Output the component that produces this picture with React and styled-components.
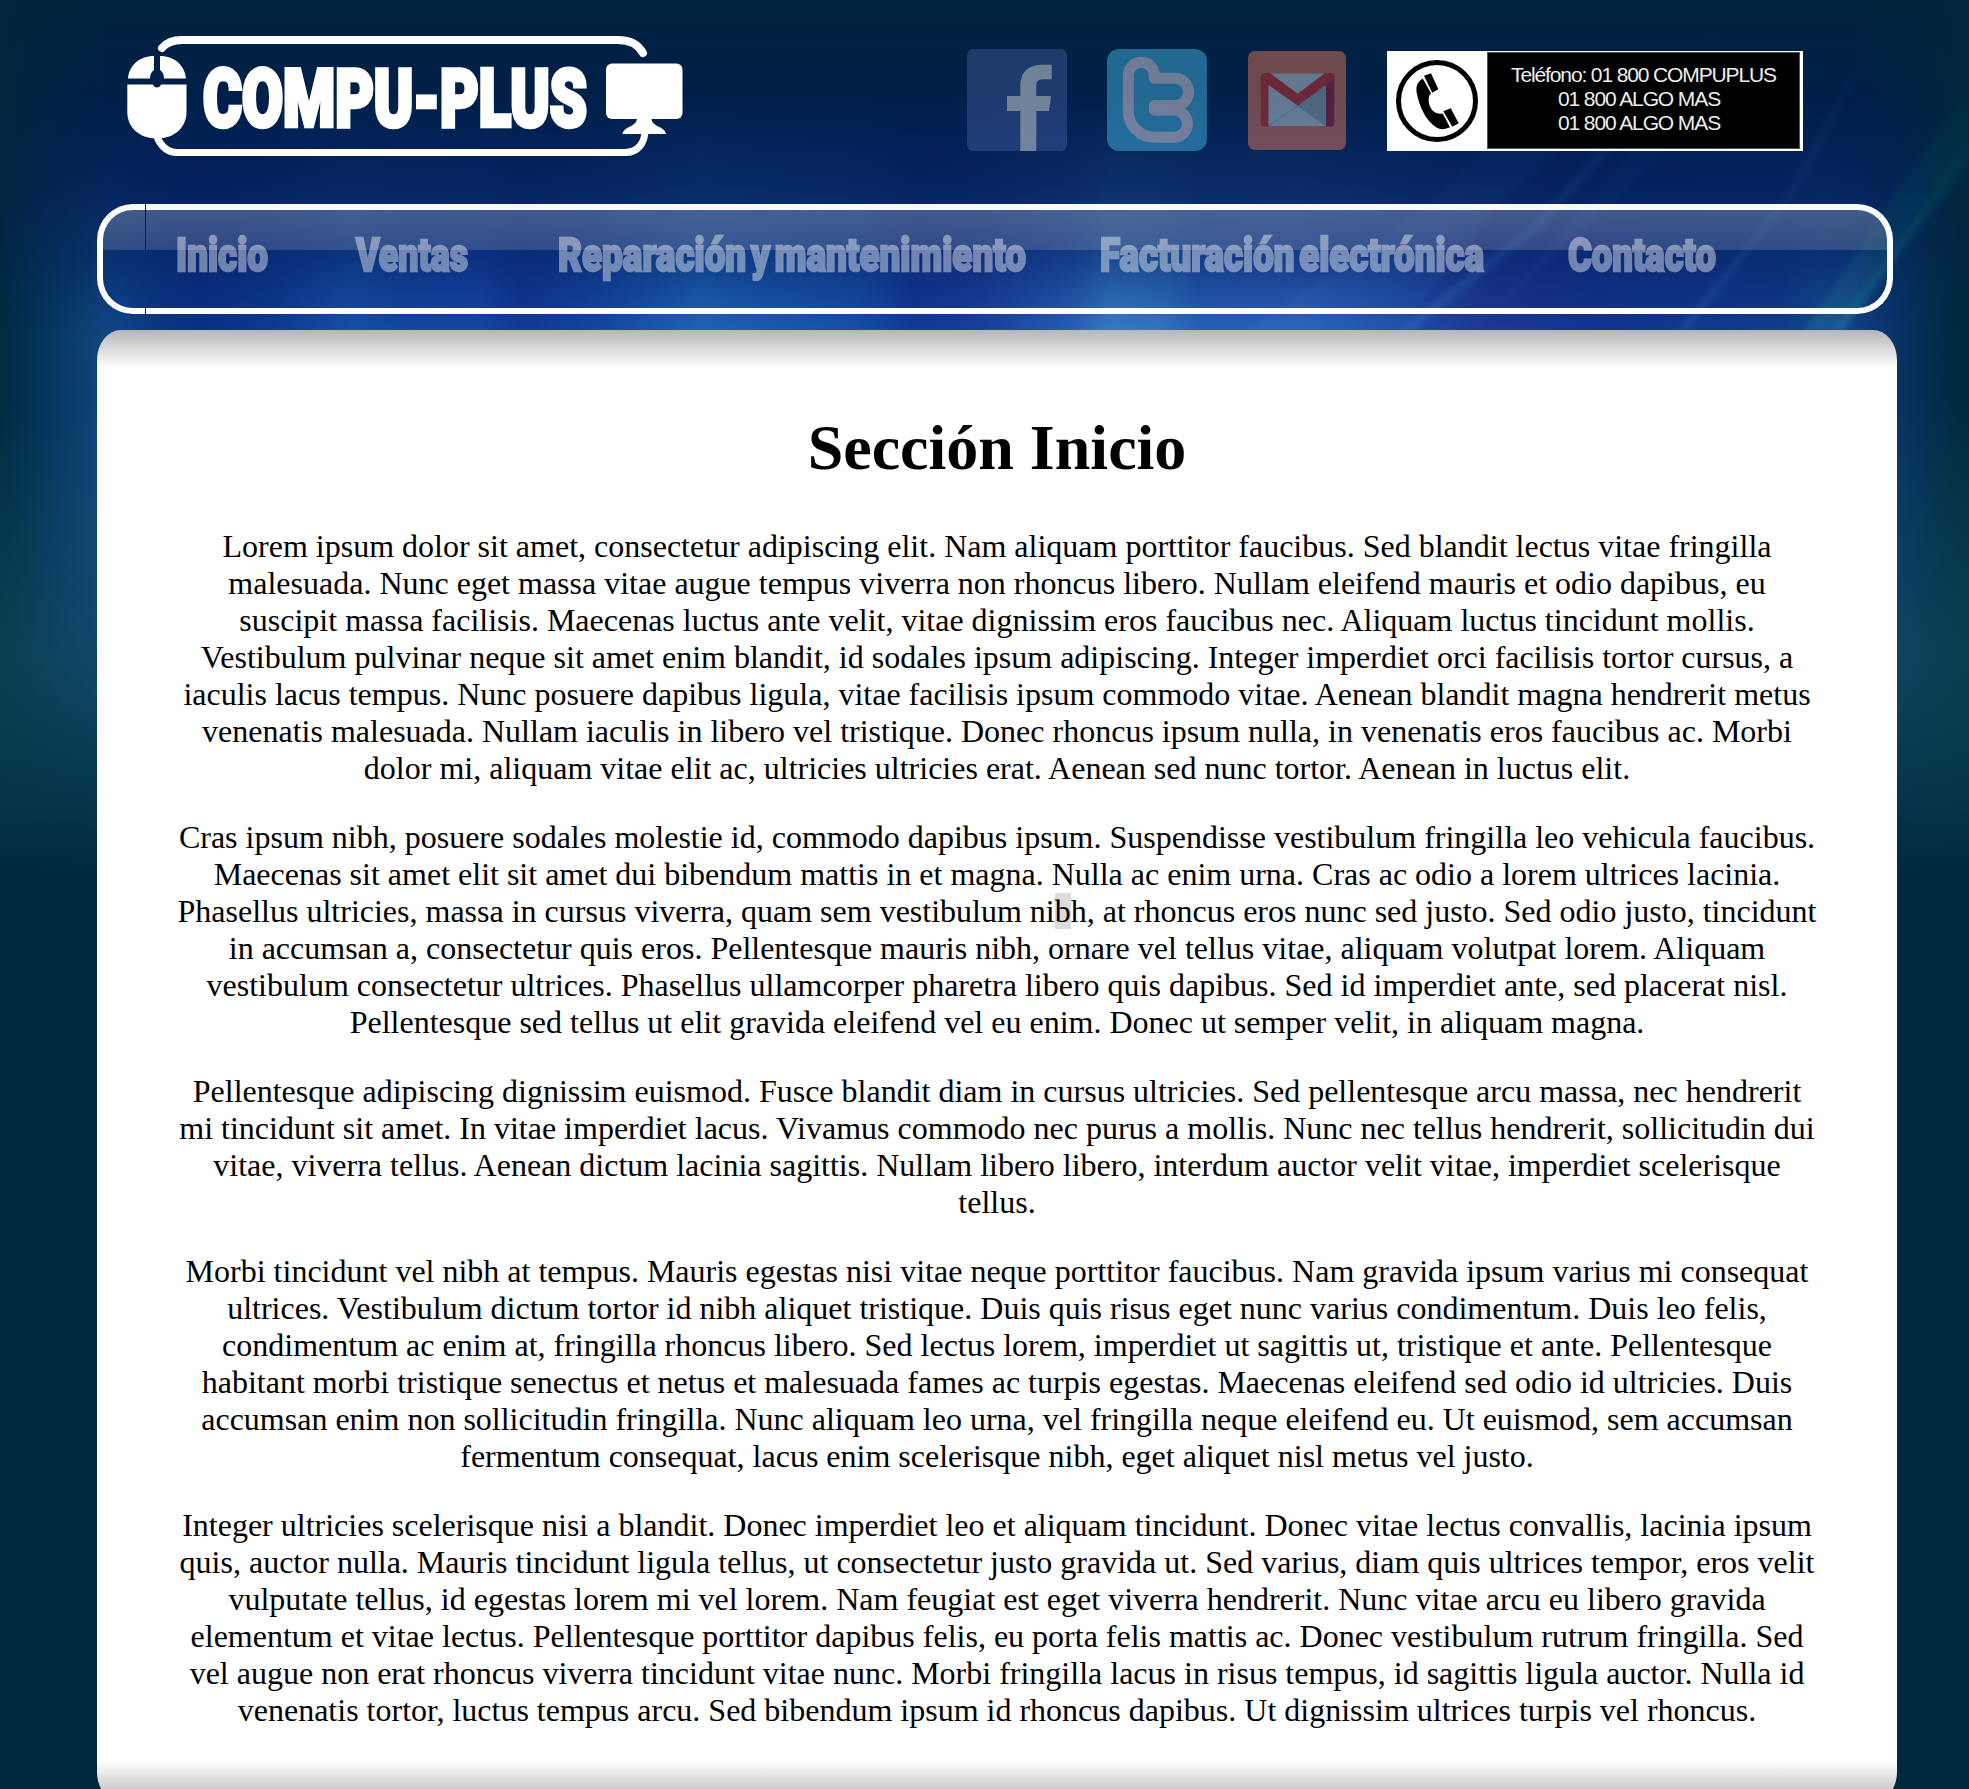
import React from "react";
import styled, { createGlobalStyle } from "styled-components";

const GlobalStyle = createGlobalStyle`
  body { margin: 0; background: #00283e; }
`;

const Page = styled.div`
  position: relative;
  width: 1969px;
  height: 1789px;
  overflow: hidden;
  background: #00283e;
  font-family: "Liberation Serif", "Times New Roman", serif;
  font-size: 32px;
  color: #000;
`;

const BackdropSvg = styled.svg`
  position: absolute;
  inset: 0;
`;

const Shell = styled.div`
  position: relative;
  display: flex;
  flex-direction: column;
  padding-left: 97px;
`;

const Header = styled.header`
  display: flex;
  align-items: flex-start;
  height: 174px;
  padding: 30px 0 0 23px;
`;

const Logo = styled.a`
  display: block;
  width: 570px;
  height: 130px;
`;

const LogoSvg = styled.svg`
  display: block;
  overflow: visible;
`;

const Contact = styled.div`
  display: flex;
  align-items: flex-start;
  margin: 19px 0 0 277px;
`;

const SocialLink = styled.a`
  display: block;
  height: 102px;
  margin-right: ${(p) => p.$gap}px;
  opacity: 0.44;
`;

const PhoneCard = styled.div`
  display: flex;
  width: 416px;
  height: 100px;
  margin-top: 2px;
  background: #fff;
`;

const PhoneLines = styled.div`
  box-sizing: border-box;
  width: 313px;
  height: 97px;
  margin-top: 1px;
  padding: 10px 0 0;
  border: 1px solid #555;
  background: #000;
  color: #eee;
  font: 21px/24px "Liberation Sans", Arial, sans-serif;
  text-align: center;
  white-space: nowrap;
`;

const PhoneLine = styled.div`
  margin-left: ${(p) => (p.$short ? -9 : 0)}px;
  letter-spacing: ${(p) => (p.$short ? -1.1 : -1.13)}px;
`;

const Nav = styled.nav`
  position: relative;
  box-sizing: border-box;
  display: flex;
  width: 1796px;
  height: 110px;
  border: 6px solid #fff;
  border-top-color: #f8f9fc;
  border-radius: 36px;
  background: linear-gradient(
    to bottom,
    rgba(255, 255, 255, 0.24) 0,
    rgba(235, 225, 235, 0.17) 40px,
    transparent 40px
  );
  padding-left: 73px;
`;

const Seam = styled.span`
  position: absolute;
  left: 42px;
  top: -6px;
  width: 1px;
  height: 110px;
  background: linear-gradient(#04205c 46px, transparent 46px, transparent 103px, #04205c 103px);
`;

const NavItem = styled.a`
  width: ${(p) => p.$w}px;
  margin-right: ${(p) => p.$gap}px;
  padding-top: 17px;
  opacity: 0.42;
`;

const NavText = styled.svg`
  display: block;
  overflow: visible;
`;

const HeavyText = styled.text`
  font-family: "Roboto", "Liberation Sans", sans-serif;
  font-weight: 900;
  word-spacing: -0.12em;
  fill: #fff;
  stroke: #fff;
  stroke-linejoin: miter;
  stroke-miterlimit: 3;
`;

const Panel = styled.main`
  box-sizing: border-box;
  width: 1800px;
  height: 1472px;
  margin-top: 16px;
  padding: 40px 80px 0;
  border-radius: 24px / 30px;
  background:
    linear-gradient(#b6b6b6, #fff) top / 100% 38px no-repeat,
    linear-gradient(#fff, #b6b6b6) bottom / 100% 42px no-repeat,
    #fff;
  text-align: center;
`;

const Title = styled.h1`
  margin: 41px 0 43px;
  font-size: 64px;
  line-height: 74px;
`;

const Paragraph = styled.p`
  margin: 0 -20px 32px;
  line-height: 37px;
  white-space: pre-line;
`;

const Mark = styled.span`
  background: #dcdcdc;
`;

const navItems = [
  { label: "Inicio", w: 92, gap: 88 },
  { label: "Ventas", w: 112, gap: 90 },
  { label: "Reparación y mantenimiento", w: 468, gap: 74 },
  { label: "Facturación electrónica", w: 384, gap: 84 },
  { label: "Contacto", w: 148, gap: 0 },
];

const paragraphs = [
  [
    "Lorem ipsum dolor sit amet, consectetur adipiscing elit. Nam aliquam porttitor faucibus. Sed blandit lectus vitae fringilla",
    "malesuada. Nunc eget massa vitae augue tempus viverra non rhoncus libero. Nullam eleifend mauris et odio dapibus, eu",
    "suscipit massa facilisis. Maecenas luctus ante velit, vitae dignissim eros faucibus nec. Aliquam luctus tincidunt mollis.",
    "Vestibulum pulvinar neque sit amet enim blandit, id sodales ipsum adipiscing. Integer imperdiet orci facilisis tortor cursus, a",
    "iaculis lacus tempus. Nunc posuere dapibus ligula, vitae facilisis ipsum commodo vitae. Aenean blandit magna hendrerit metus",
    "venenatis malesuada. Nullam iaculis in libero vel tristique. Donec rhoncus ipsum nulla, in venenatis eros faucibus ac. Morbi",
    "dolor mi, aliquam vitae elit ac, ultricies ultricies erat. Aenean sed nunc tortor. Aenean in luctus elit.",
  ],
  [
    "Cras ipsum nibh, posuere sodales molestie id, commodo dapibus ipsum. Suspendisse vestibulum fringilla leo vehicula faucibus.",
    "Maecenas sit amet elit sit amet dui bibendum mattis in et magna. Nulla ac enim urna. Cras ac odio a lorem ultrices lacinia.",
    "Phasellus ultricies, massa in cursus viverra, quam sem vestibulum ni[b]h, at rhoncus eros nunc sed justo. Sed odio justo, tincidunt",
    "in accumsan a, consectetur quis eros. Pellentesque mauris nibh, ornare vel tellus vitae, aliquam volutpat lorem. Aliquam",
    "vestibulum consectetur ultrices. Phasellus ullamcorper pharetra libero quis dapibus. Sed id imperdiet ante, sed placerat nisl.",
    "Pellentesque sed tellus ut elit gravida eleifend vel eu enim. Donec ut semper velit, in aliquam magna.",
  ],
  [
    "Pellentesque adipiscing dignissim euismod. Fusce blandit diam in cursus ultricies. Sed pellentesque arcu massa, nec hendrerit",
    "mi tincidunt sit amet. In vitae imperdiet lacus. Vivamus commodo nec purus a mollis. Nunc nec tellus hendrerit, sollicitudin dui",
    "vitae, viverra tellus. Aenean dictum lacinia sagittis. Nullam libero libero, interdum auctor velit vitae, imperdiet scelerisque",
    "tellus.",
  ],
  [
    "Morbi tincidunt vel nibh at tempus. Mauris egestas nisi vitae neque porttitor faucibus. Nam gravida ipsum varius mi consequat",
    "ultrices. Vestibulum dictum tortor id nibh aliquet tristique. Duis quis risus eget nunc varius condimentum. Duis leo felis,",
    "condimentum ac enim at, fringilla rhoncus libero. Sed lectus lorem, imperdiet ut sagittis ut, tristique et ante. Pellentesque",
    "habitant morbi tristique senectus et netus et malesuada fames ac turpis egestas. Maecenas eleifend sed odio id ultricies. Duis",
    "accumsan enim non sollicitudin fringilla. Nunc aliquam leo urna, vel fringilla neque eleifend eu. Ut euismod, sem accumsan",
    "fermentum consequat, lacus enim scelerisque nibh, eget aliquet nisl metus vel justo.",
  ],
  [
    "Integer ultricies scelerisque nisi a blandit. Donec imperdiet leo et aliquam tincidunt. Donec vitae lectus convallis, lacinia ipsum",
    "quis, auctor nulla. Mauris tincidunt ligula tellus, ut consectetur justo gravida ut. Sed varius, diam quis ultrices tempor, eros velit",
    "vulputate tellus, id egestas lorem mi vel lorem. Nam feugiat est eget viverra hendrerit. Nunc vitae arcu eu libero gravida",
    "elementum et vitae lectus. Pellentesque porttitor dapibus felis, eu porta felis mattis ac. Donec vestibulum rutrum fringilla. Sed",
    "vel augue non erat rhoncus viverra tincidunt vitae nunc. Morbi fringilla lacus in risus tempus, id sagittis ligula auctor. Nulla id",
    "venenatis tortor, luctus tempus arcu. Sed bibendum ipsum id rhoncus dapibus. Ut dignissim ultrices turpis vel rhoncus.",
  ],
];

// Horizontal colour stops of the glow: [x, colour]
const glow = [
  [0, "#04345c"], [60, "#0c4278"], [97, "#11487f"], [119, "#10448a"], [150, "#0e3a84"], [200, "#0c3088"],
  [270, "#0f3a94"], [350, "#1a50ac"], [400, "#1448a4"], [480, "#1846a8"], [520, "#15389a"],
  [600, "#1648a4"], [700, "#2068bc"], [770, "#1c5cb4"], [860, "#1850ac"], [915, "#15389a"],
  [980, "#1c409e"], [1070, "#2a60b8"], [1110, "#3880ca"], [1160, "#3478c6"], [1200, "#2a62bc"],
  [1300, "#3062c0"], [1380, "#2454b0"], [1490, "#1f3896"], [1600, "#133492"], [1780, "#123c8c"],
  [1820, "#15488e"], [1880, "#103c84"], [1969, "#022c4c"],
];

function Backdrop() {
  return (
    <BackdropSvg width="1969" height="1789" viewBox="0 0 1969 1789" aria-hidden="true">
      <defs>
        <linearGradient id="sky" x1="0" y1="0" x2="0" y2="1">
          <stop offset="0" stopColor="#00233e" />
          <stop offset="0.1" stopColor="#002048" />
          <stop offset="0.2" stopColor="#021e54" />
          <stop offset="0.36" stopColor="#07246a" />
          <stop offset="0.6" stopColor="#0a3474" />
          <stop offset="1" stopColor="#00283e" />
        </linearGradient>
        <linearGradient id="glow" gradientUnits="userSpaceOnUse" x1="0" y1="0" x2="1969" y2="0">
          {glow.map(([x, c]) => <stop key={x} offset={x / 1969} stopColor={c} />)}
        </linearGradient>
        <linearGradient id="fade" gradientUnits="userSpaceOnUse" x1="0" y1="90" x2="0" y2="940">
          <stop offset="0" stopColor="#000" />
          <stop offset="0.12" stopColor="#303030" />
          <stop offset="0.2" stopColor="#707070" />
          <stop offset="0.29" stopColor="#fff" />
          <stop offset="0.5" stopColor="#ddd" />
          <stop offset="0.68" stopColor="#777" />
          <stop offset="0.83" stopColor="#222" />
          <stop offset="1" stopColor="#000" />
        </linearGradient>
        <mask id="fadeMask"><rect width="1969" height="1000" fill="url(#fade)" /></mask>
        <linearGradient id="edges" x1="0" y1="0" x2="1" y2="0">
          <stop offset="0" stopColor="#00283e" stopOpacity="0.85" />
          <stop offset="0.022" stopColor="#00283e" stopOpacity="0.45" />
          <stop offset="0.055" stopColor="#00283e" stopOpacity="0" />
          <stop offset="0.94" stopColor="#00283e" stopOpacity="0" />
          <stop offset="0.975" stopColor="#00283e" stopOpacity="0.5" />
          <stop offset="1" stopColor="#00283e" stopOpacity="0.95" />
        </linearGradient>
        <linearGradient id="teal" gradientUnits="userSpaceOnUse" x1="0" y1="400" x2="0" y2="960">
          <stop offset="0" stopColor="#1a5c68" stopOpacity="0" />
          <stop offset="0.45" stopColor="#165464" stopOpacity="0.6" />
          <stop offset="0.85" stopColor="#00283e" stopOpacity="1" />
          <stop offset="1" stopColor="#00283e" stopOpacity="1" />
        </linearGradient>
        <linearGradient id="ray" gradientUnits="userSpaceOnUse" x1="0" y1="60" x2="0" y2="340">
          <stop offset="0" stopColor="#3f8ad0" stopOpacity="0.01" />
          <stop offset="1" stopColor="#3f8ad0" stopOpacity="0.26" />
        </linearGradient>
        <linearGradient id="rayTeal" gradientUnits="userSpaceOnUse" x1="0" y1="60" x2="0" y2="340">
          <stop offset="0" stopColor="#1d8a88" stopOpacity="0.02" />
          <stop offset="0.6" stopColor="#1d8a88" stopOpacity="0.3" />
          <stop offset="1" stopColor="#2494a8" stopOpacity="0.65" />
        </linearGradient>
        <filter id="soft"><feGaussianBlur stdDeviation="3" /></filter>
      </defs>
      <rect width="1969" height="900" fill="url(#sky)" />
      <rect width="1969" height="1000" fill="url(#glow)" mask="url(#fadeMask)" />
      <rect width="1969" height="960" fill="url(#edges)" />
      <rect y="400" width="1969" height="560" fill="url(#teal)" opacity="0.85" />
      <g filter="url(#soft)">
        <path d="M1243 332L1428 205L1600 40L1680 40L1500 205L1398 332Z" fill="url(#ray)" opacity="0.35" />
        <path d="M1396 332L1534 223L1720 20L1728 20L1540 228L1412 332Z" fill="url(#ray)" />
        <path d="M1470 332L1580 215L1700 60L1800 20L1600 215Z" fill="url(#ray)" opacity="0.3" />
        <path d="M1678 332L1791 190L1880 20L1886 20L1797 190L1686 332Z" fill="url(#ray)" />
        <path d="M1803 332L1897 190L1969 90V165L1842 332Z" fill="url(#rayTeal)" opacity="0.4" />
        <path d="M1832 332L1936 190L1969 140V150L1842 332Z" fill="url(#rayTeal)" opacity="0.4" />
      </g>
    </BackdropSvg>
  );
}

function LogoArt() {
  return (
    <LogoSvg width="570" height="130" viewBox="120 30 570 130" fill="#fff">
      <g fill="none" stroke="#fff" strokeWidth="8" strokeLinecap="round">
        <path d="M162 48C167 42 174 40 182 40H618C630 40 638 44 643 53" />
        <path d="M157 137C161 146 168 152.500 177 152.500H625C638 152.500 645 143 645 130" strokeWidth="7" strokeLinecap="butt" />
      </g>
      <path d="M154 56V70C151 72 150 75 150 78.500H128C129 66 139 56 154 56Z" />
      <path d="M160 56C175 56 185 66 186 78.500H164C164 75 163 72 160 70Z" />
      <path d="M127.300 84.500H153C154 88.500 160 88.500 161 84.500H186.500V112C186.500 127 175 138.500 157 138.500S127.300 127 127.300 112Z" />
      <HeavyText x="203" y="126" textLength="384" lengthAdjust="spacingAndGlyphs" fontSize="80" strokeWidth="4.500">
        COMPU-PLUS
      </HeavyText>
      <rect x="606" y="63.500" width="76.500" height="55.500" rx="6" />
      <path d="M637 118H651.500C651 127 665 126 666 134H622.500C624 126 637 127 637 118Z" />
    </LogoSvg>
  );
}

function FacebookIcon() {
  return (
    <svg width="100" height="102" viewBox="0 0 100 102">
      <rect width="100" height="102" fill="#03122c" opacity="0.7" />
      <rect width="100" height="102" rx="6" fill="#425f9e" />
      <path d="M53.300 102V62H40V47H53.300V38C53.300 22 62 15.700 76 15.700H84.700V30.300H76C70.500 30.300 69.300 33 69.300 38V47H84L82 62H69.300V102Z" fill="#fff" />
    </svg>
  );
}

function TwitterIcon() {
  return (
    <svg width="100" height="102" viewBox="0 0 100 102">
      <rect width="100" height="102" rx="12" fill="#4ec3f0" />
      <g fill="none" stroke="#fdf0fa" strokeWidth="11" strokeLinejoin="round">
        <path d="M47.300 29.300H68a13.600 13.600 0 0 1 0 27.200H47.500V61.200H68a13.600 13.600 0 0 1 0 27.100H48C33 88.300 21.300 77 21.300 62V26.300a13 13 0 0 1 26 0V29.300H55" />
      </g>
    </svg>
  );
}

function GmailIcon() {
  return (
    <svg width="98" height="102" viewBox="0 -2 98 102">
      <rect width="98" height="99" rx="7" fill="#fa8058" />
      <rect x="20" y="22.500" width="58" height="52.500" fill="#dfe8ea" />
      <path d="M78 34V75L49.700 54.700Z" fill="#acc0c0" />
      <path d="M20 75L49.700 54.700L78 75" fill="none" stroke="#b4c0c2" strokeWidth="1" />
      <path d="M78 26L86.300 24V72Q86.300 75.500 83 75.500H78Z" fill="#b82434" />
      <path d="M12.700 26Q12.700 22 17 22H22L49.700 42.700L77 22H82Q86.300 22 86.300 26L85 29L49.700 54.700L20.500 34V75.500H16Q12.700 75.500 12.700 72Z" fill="#f1342c" />
    </svg>
  );
}

function PhoneIcon() {
  return (
    <svg width="100" height="100" viewBox="0 0 100 100">
      <circle cx="50" cy="50" r="38.500" fill="none" stroke="#000" strokeWidth="5" />
      <path d="M37 24.700L44 22.300L51.300 38.300L45.300 41.700Z" />
      <path d="M35.700 27.500C30 31 28.500 36 30 43C32 53 36 63 43 71C49 78 55 80 63 76.300L55.700 62.500C49 64 43 59 42 52C41.300 48 41.500 45 44 42.300Z" />
      <path d="M56.300 60.300L63.700 57.300L71.700 72.300L65.300 75.700Z" />
    </svg>
  );
}

function renderText(lines) {
  const [before, rest] = lines.join("\n").split("[");
  if (rest === undefined) return before;
  const [marked, after] = rest.split("]");
  return <>{before}<Mark>{marked}</Mark>{after}</>;
}

export default function App() {
  return (
    <Page>
      <GlobalStyle />
      <Backdrop />
      <Shell>
        <Header>
          <Logo><LogoArt /></Logo>
          <Contact>
            <SocialLink $gap={40}><FacebookIcon /></SocialLink>
            <SocialLink $gap={41}><TwitterIcon /></SocialLink>
            <SocialLink $gap={41}><GmailIcon /></SocialLink>
            <PhoneCard>
              <PhoneIcon />
              <PhoneLines>
                <PhoneLine>Teléfono: 01 800 COMPUPLUS</PhoneLine>
                <PhoneLine $short>01 800 ALGO MAS</PhoneLine>
                <PhoneLine $short>01 800 ALGO MAS</PhoneLine>
              </PhoneLines>
            </PhoneCard>
          </Contact>
        </Header>
        <Nav>
          <Seam />
          {navItems.map(({ label, w, gap }) => (
            <NavItem key={label} $w={w} $gap={gap}>
              <NavText width={w} height="50">
                <HeavyText x="0" y="43.500" textLength={w} lengthAdjust="spacingAndGlyphs" fontSize="46" strokeWidth="2.400">
                  {label}
                </HeavyText>
              </NavText>
            </NavItem>
          ))}
        </Nav>
        <Panel>
          <Title>Sección Inicio</Title>
          {paragraphs.map((lines, i) => (
            <Paragraph key={i}>{renderText(lines)}</Paragraph>
          ))}
        </Panel>
      </Shell>
    </Page>
  );
}
